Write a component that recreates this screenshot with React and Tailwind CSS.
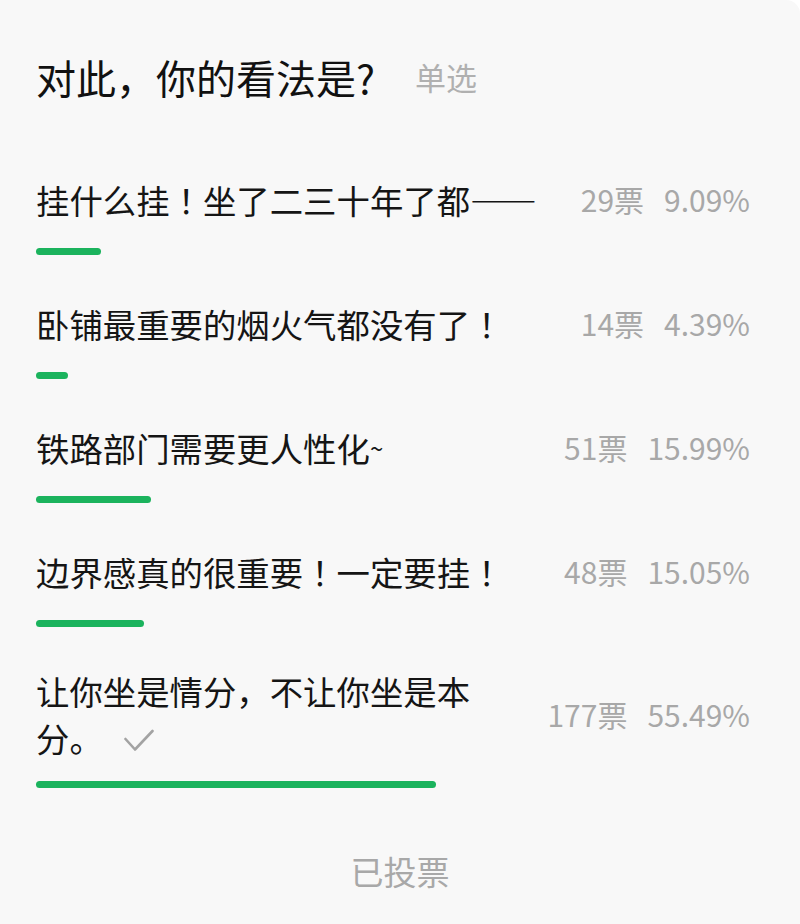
const options = [
  { text: "挂什么挂！坐了二三十年了都——", votes: 29, pct: 9.09 },
  { text: "卧铺最重要的烟火气都没有了！", votes: 14, pct: 4.39 },
  { text: "铁路部门需要更人性化~", votes: 51, pct: 15.99 },
  { text: "边界感真的很重要！一定要挂！", votes: 48, pct: 15.05 },
  {
    text: "让你坐是情分，不让你坐是本\n分。",
    votes: 177,
    pct: 55.49,
    picked: true,
  },
];

// the phone font centres full-width "！" and draws "——" full width
function Rich({ text }) {
  const parts = text.split(/(！|——|~|\n)/);
  return parts.map((p, i) => {
    if (p === "！")
      return (
        <span key={i} style={{ fontFamily: '"Noto Sans CJK TC", sans-serif' }}>
          ！
        </span>
      );
    if (p === "——")
      return (
        <span key={i} className="[font-feature-settings:'fwid']">
          ——
        </span>
      );
    if (p === "~")
      return (
        <span key={i} className="text-[24px] align-top">
          ~
        </span>
      );
    if (p === "\n") return <br key={i} />;
    return p;
  });
}

function Check() {
  return (
    <svg
      width="30"
      height="23"
      viewBox="0 0 30 23"
      className="inline-block align-middle ml-[21px] -mt-[4px]"
      fill="none"
      stroke="#a3a3a3"
      strokeWidth="2.6"
      strokeLinecap="round"
      strokeLinejoin="round"
    >
      <polyline points="1.5,10 11,20.5 28.5,2" />
    </svg>
  );
}

function Option({ opt }) {
  return (
    <div className="mb-[40px]">
      <div className="flex items-center justify-between min-h-[57px]">
        <div className="text-[33.4px] leading-[47px] text-[#151515]">
          <Rich text={opt.text} />
          {opt.picked && <Check />}
        </div>
        <div className="shrink-0 whitespace-nowrap text-[30px] leading-[47px] text-[#a8a8a8] pl-10">
          <span>{opt.votes}票</span>
          <span className="ml-[20px]">{opt.pct.toFixed(2)}%</span>
        </div>
      </div>
      <div className="mt-[20px] w-[720px]">
        <div
          className="h-[7px] rounded-full bg-[#1bb35d]"
          style={{ width: `${opt.pct}%` }}
        />
      </div>
    </div>
  );
}

export default function App() {
  return (
    <div
      className="min-h-[924px] bg-white"
      style={{ fontFamily: '"Noto Sans CJK SC", "Noto Sans", sans-serif' }}
    >
      <div className="min-h-[924px] bg-[#f8f8f8] rounded-tr-[14px] pl-[36px] pr-[50px] pt-[51px]">
        <div className="flex items-center h-[52px]">
          <h1 className="text-[40px] leading-[52px] text-[#111] font-normal">
            对此，你的看法是?
          </h1>
          <span className="ml-[40px] text-[31px] text-[#b0b0b0]">单选</span>
        </div>

        <div className="mt-[68px]">
          {options.map((opt, i) => (
            <Option key={i} opt={opt} />
          ))}
        </div>

        <div className="mt-[60px] text-center text-[33px] leading-[47px] text-[#a8a8a8] -mr-[14px]">
          已投票
        </div>
      </div>
    </div>
  );
}
